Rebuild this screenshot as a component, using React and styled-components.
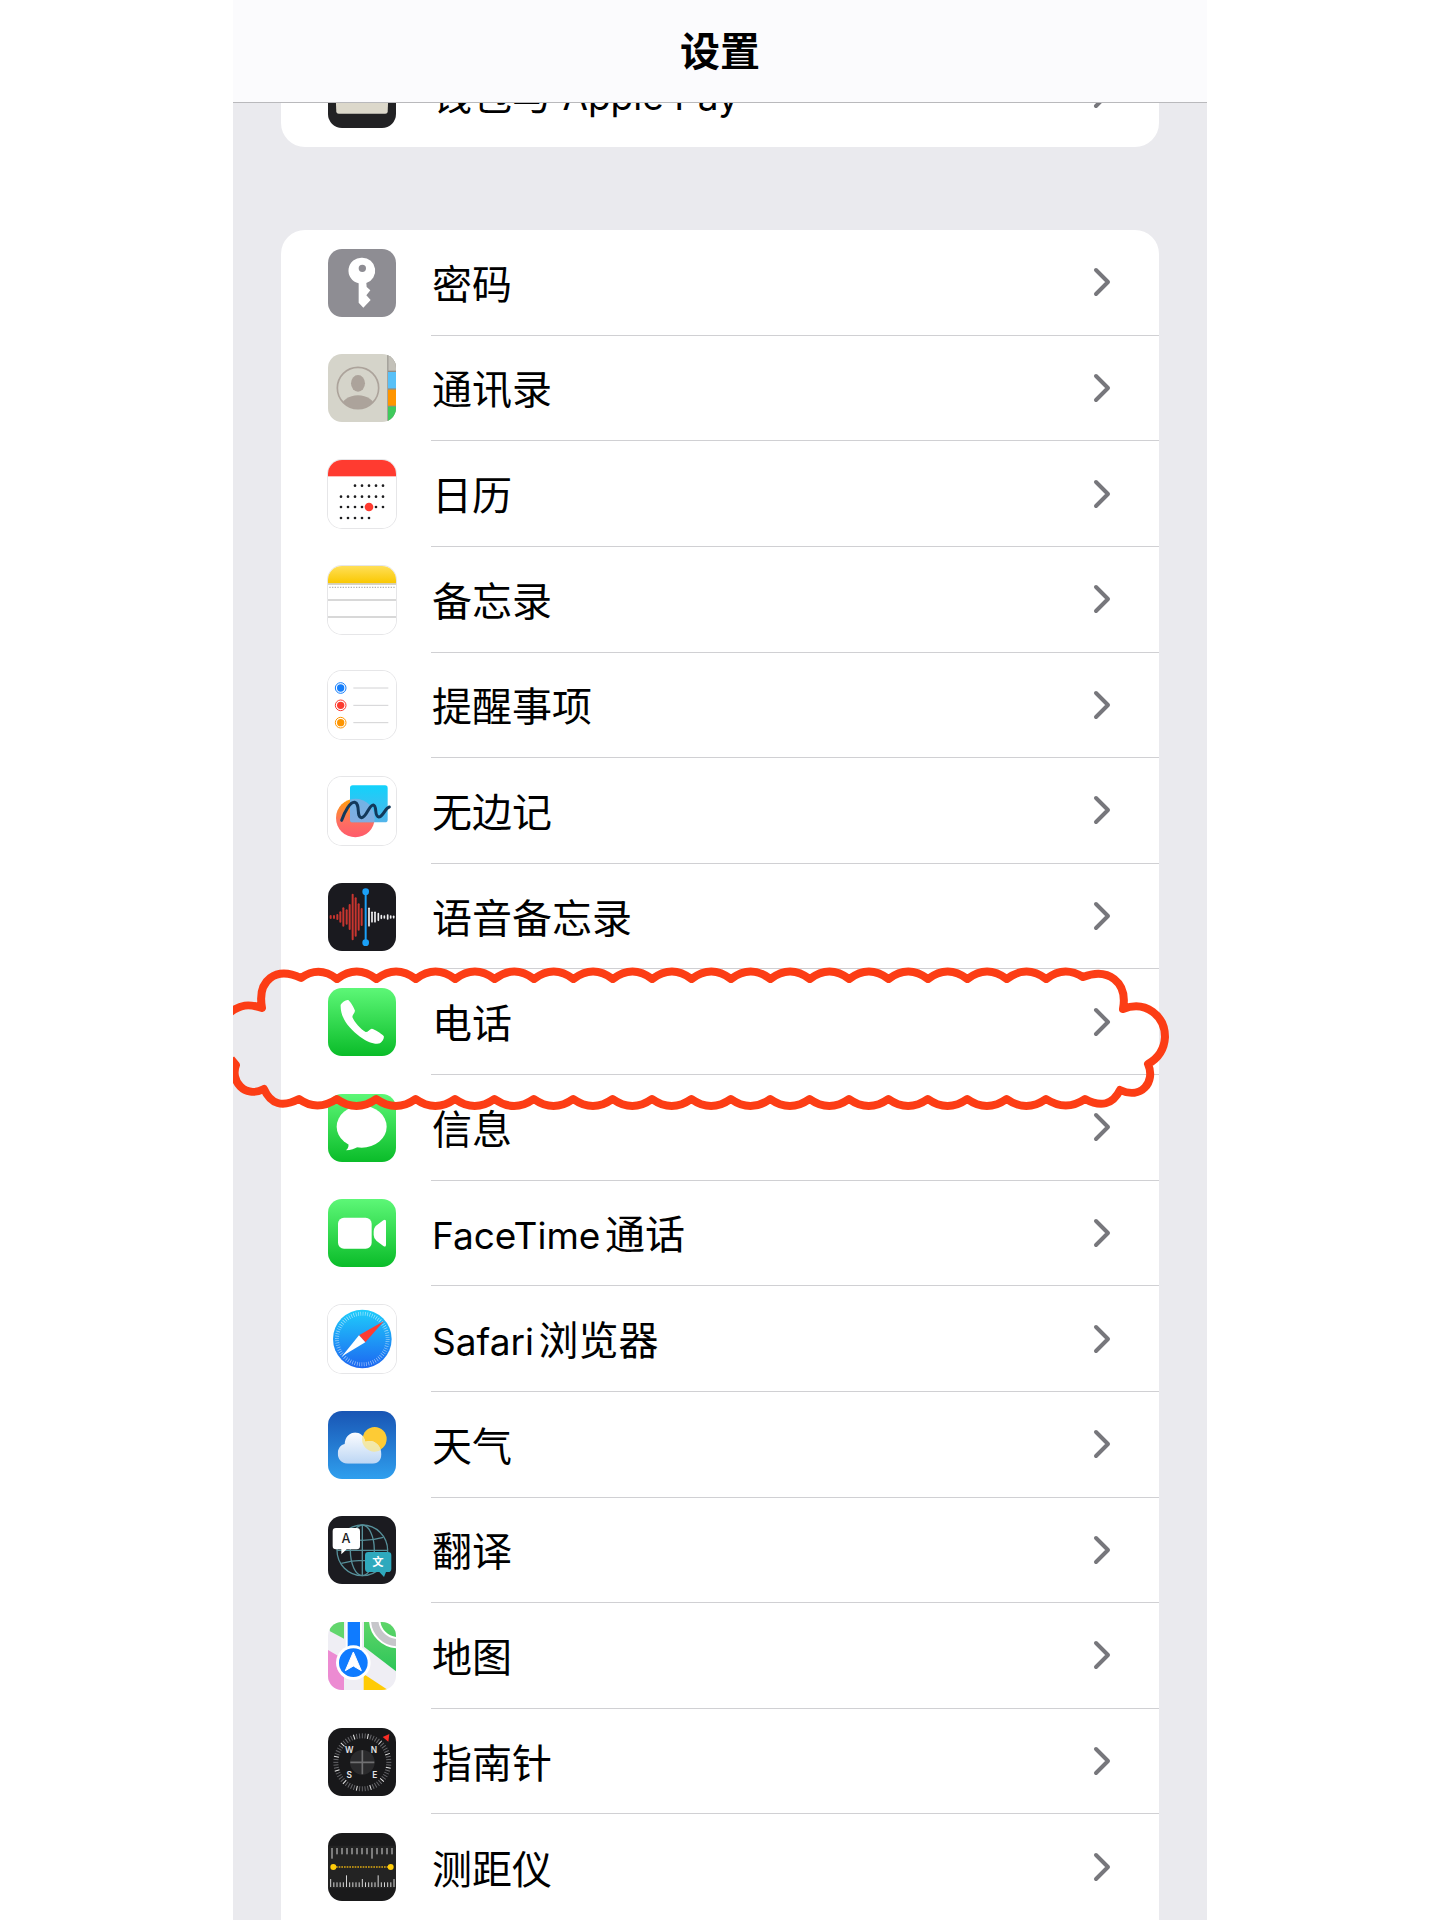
import React from 'react';
import styled, { createGlobalStyle } from 'styled-components';

const CALENDAR_ROWS = [
  { y: 77, from: 2, to: 6 },
  { y: 110, from: 0, to: 6 },
  { y: 141, from: 0, to: 6 },
  { y: 174, from: 0, to: 4 },
];

// [x, half height]
const RED_BARS = [[8, 3], [18, 3], [28, 6], [37, 14], [46, 26], [56, 20], [65, 36], [74, 67], [83, 56], [92, 38], [101, 24]];
const WHITE_BARS = [[123, 26], [132, 14], [141, 14], [151, 10], [160, 4], [169, 3], [179, 6], [188, 3], [197, 2]];

const range = (n) => Array.from({ length: n }, (_, i) => i);

// Every icon is drawn on a 204 x 204 grid
const icons = {
  wallet: (
    <>
      <rect width="204" height="204" fill="#222224" />
      <path d="M20 40H184L179 156Q178 161 172 161H32Q26 161 25 156Z" fill="#dcd8cb" />
    </>
  ),
  key: (
    <>
      <rect width="204" height="204" fill="#8e8d93" />
      <path
        fill="#fff"
        fillRule="evenodd"
        d="M103 26A39 39 0 0 1 115 102L116 114L127 124L115 139L128 153L106 176L92 161V103A39 39 0 0 1 103 26ZM103 47A11 11 0 1 0 103 69A11 11 0 1 0 103 47Z"
      />
    </>
  ),
  contacts: (
    <>
      <clipPath id="face"><circle cx="90" cy="102" r="62" /></clipPath>
      <rect width="204" height="204" fill="#d5d4ca" />
      <rect x="178" width="26" height="204" fill="#8f8d86" />
      <rect x="181" width="23" height="50" fill="#c3c1b9" />
      <rect x="180" y="54" width="24" height="49" fill="#58c0f7" />
      <rect x="180" y="107" width="24" height="48" fill="#ff9500" />
      <rect x="180" y="158" width="24" height="46" fill="#3fca5c" />
      <circle cx="90" cy="102" r="62" fill="none" stroke="#aca39b" strokeWidth="5" />
      <ellipse cx="90" cy="88" rx="21" ry="25" fill="#aca39b" />
      <ellipse cx="90" cy="160" rx="50" ry="36" fill="#aca39b" clipPath="url(#face)" />
    </>
  ),
  calendar: (
    <>
      <rect width="204" height="204" fill="#fff" />
      <rect width="204" height="49" fill="#ff3b30" />
      {CALENDAR_ROWS.map((row) =>
        range(row.to - row.from + 1).map((i) => (
          <circle key={i} cx={39 + (row.from + i) * 21} cy={row.y} r="4" fill="#1d1d1f" />
        ))
      )}
      <circle cx="123" cy="141" r="13" fill="#ff3b30" />
    </>
  ),
  notes: (
    <>
      <linearGradient id="pad" x2="0" y2="1">
        <stop stopColor="#ffdf58" />
        <stop offset="1" stopColor="#fac800" />
      </linearGradient>
      <rect width="204" height="204" fill="#fff" />
      <rect width="204" height="52" fill="url(#pad)" />
      <path d="M0 54H204" stroke="#c9c4b4" strokeWidth="4" />
      <path d="M4 64H204" stroke="#b5b5b5" strokeWidth="4" strokeDasharray="4 4" />
      <path d="M0 102H204M0 153H204" stroke="#cbcbcb" strokeWidth="4" />
    </>
  ),
  reminders: (
    <>
      <rect width="204" height="204" fill="#fff" />
      {['#147efb', '#fc3b30', '#fd9500'].map((color, i) => (
        <g key={color}>
          <circle cx="38" cy={51 + i * 52} r="16" fill="none" stroke={color} strokeWidth="3" />
          <circle cx="38" cy={51 + i * 52} r="11" fill={color} />
          <path d={`M76 ${51 + i * 52}H181`} stroke="#d2d2d4" strokeWidth="3" />
        </g>
      ))}
    </>
  ),
  freeform: (
    <>
      <linearGradient id="ball" x2="0" y2="1">
        <stop stopColor="#ff9f0a" />
        <stop offset="0.6" stopColor="#fd6f61" />
        <stop offset="1" stopColor="#ff5a6b" />
      </linearGradient>
      <linearGradient id="sheet" x2="0" y2="1">
        <stop stopColor="#12d2fb" />
        <stop offset="1" stopColor="#53b4ea" />
      </linearGradient>
      <clipPath id="sheetArea"><rect x="66" y="25" width="113" height="111" rx="8" /></clipPath>
      <rect width="204" height="204" fill="#fff" />
      <circle cx="82" cy="123" r="58" fill="url(#ball)" />
      <rect x="66" y="25" width="113" height="111" rx="8" fill="url(#sheet)" />
      <circle cx="82" cy="123" r="58" fill="#9aa9dc" opacity="0.65" clipPath="url(#sheetArea)" />
      <path
        d="M41 130C50 104 66 74 80 76C98 80 84 120 100 122C116 122 122 84 136 84C148 86 138 118 152 120C166 120 170 94 184 90"
        fill="none"
        stroke="#12395b"
        strokeWidth="9"
        strokeLinecap="round"
      />
    </>
  ),
  voice: (
    <>
      <rect width="204" height="204" fill="#1a1a1f" />
      {RED_BARS.map(([x, h]) => (
        <path key={x} d={`M${x} ${102 - h}V${102 + h}`} stroke="#c8352f" strokeWidth="6" strokeLinecap="round" />
      ))}
      {WHITE_BARS.map(([x, h]) => (
        <path key={x} d={`M${x} ${102 - h}V${102 + h}`} stroke="#f1f1f3" strokeWidth="5" strokeLinecap="round" />
      ))}
      <path d="M113 26V179" stroke="#1ba0f7" strokeWidth="6" />
      <circle cx="113" cy="26" r="10" fill="#1ba0f7" />
      <circle cx="113" cy="179" r="10" fill="#1ba0f7" />
    </>
  ),
  phone: (
    <>
      <rect width="204" height="204" fill="url(#green)" />
      <path
        fill="#fff"
        d="M38 50C43 42 54 34 61 36C68 42 77 57 81 68C80 76 73 80 73 87C78 101 98 124 113 132C119 133 124 124 131 122C140 124 158 134 167 144C170 150 163 162 156 166C140 170 118 162 96 146C64 122 36 90 38 50Z"
      />
    </>
  ),
  messages: (
    <>
      <rect width="204" height="204" fill="url(#green)" />
      <ellipse cx="101" cy="98" rx="75" ry="63" fill="#fff" />
      <path d="M60 144C64 155 61 163 54 169C68 169 80 165 92 157Z" fill="#fff" />
    </>
  ),
  facetime: (
    <>
      <rect width="204" height="204" fill="url(#green)" />
      <rect x="30" y="56" width="101" height="93" rx="18" fill="#fff" />
      <path d="M137 98Q137 86 146 79L166 64Q174 59 174 68V137Q174 146 166 141L146 126Q137 119 137 108Z" fill="#fff" />
    </>
  ),
  safari: (
    <>
      <linearGradient id="dial" x2="0" y2="1">
        <stop stopColor="#1fcdfb" />
        <stop offset="1" stopColor="#1d67f1" />
      </linearGradient>
      <rect width="204" height="204" fill="#fff" />
      <circle cx="103" cy="102" r="88" fill="url(#dial)" />
      <circle cx="103" cy="102" r="76" fill="none" stroke="#fff" strokeOpacity="0.6" strokeWidth="12" strokeDasharray="2 5" />
      <path d="M168 48L93 91L112 112Z" fill="#fd3c32" />
      <path d="M42 154L93 91L112 112Z" fill="#fff" />
    </>
  ),
  weather: (
    <>
      <linearGradient id="sky" x2="0" y2="1">
        <stop stopColor="#1955b4" />
        <stop offset="1" stopColor="#2f9fee" />
      </linearGradient>
      <linearGradient id="cloud" gradientUnits="userSpaceOnUse" x1="0" y1="64" x2="0" y2="158">
        <stop stopColor="#fcfdff" />
        <stop offset="1" stopColor="#bcd6f4" />
      </linearGradient>
      <clipPath id="cloudArea">
        <path d="M60 158C22 158 20 106 50 99C52 56 104 52 112 92C142 82 162 108 160 132C159 148 150 158 134 158Z" />
      </clipPath>
      <rect width="204" height="204" fill="url(#sky)" />
      <circle cx="140" cy="84" r="36" fill="#fdcb35" />
      <g clipPath="url(#cloudArea)">
        <rect width="204" height="204" fill="url(#cloud)" />
        <circle cx="140" cy="84" r="38" fill="#f7e58c" opacity="0.75" />
      </g>
    </>
  ),
  translate: (
    <>
      <rect width="204" height="204" fill="#1b1b20" />
      <g fill="none" stroke="#568f99" strokeWidth="4">
        <circle cx="103" cy="103" r="76" />
        <ellipse cx="103" cy="103" rx="36" ry="76" />
        <path d="M103 27V179M27 103H179M40 64Q103 82 166 64M40 142Q103 124 166 142" />
      </g>
      <path d="M24 36H86Q96 36 96 46V90Q96 100 86 100H56L40 115V100H24Q14 100 14 90V46Q14 36 24 36Z" fill="#fff" />
      <path d="M121 108H180Q190 108 190 118V158Q190 168 180 168H174L168 183L154 168H121Q111 168 111 158V118Q111 108 121 108Z" fill="#2fa9bd" />
      <text x="54" y="82" fill="#1b1b20" fontSize="38" fontWeight="500" textAnchor="middle">A</text>
      <text x="150" y="151" fill="#fff" fontSize="34" fontWeight="700" textAnchor="middle">文</text>
    </>
  ),
  maps: (
    <>
      <linearGradient id="park" x2="0" y2="1">
        <stop stopColor="#5ed569" />
        <stop offset="1" stopColor="#2dc558" />
      </linearGradient>
      <clipPath id="parkArea"><path d="M108 0H204V148L108 74Z" /></clipPath>
      <rect width="204" height="204" fill="#efeef4" />
      <path d="M0 0H48V50L6 28Z" fill="#62d66d" />
      <path d="M108 0H204V148L108 74Z" fill="url(#park)" />
      <g clipPath="url(#parkArea)" fill="none">
        <circle cx="210" cy="-8" r="70" stroke="#fff" strokeWidth="34" />
        <circle cx="210" cy="-8" r="70" stroke="#c6c6ca" strokeWidth="22" />
      </g>
      <path d="M0 84L48 112V204H0Z" fill="#ec8bd2" />
      <path d="M107 156L180 204H107Z" fill="#ffcb05" />
      <rect x="53" width="49" height="90" fill="#fff" />
      <rect x="59" width="37" height="90" fill="#0f7bff" />
      <circle cx="76" cy="122" r="52" fill="#fff" />
      <circle cx="76" cy="122" r="43" fill="#0f7bff" />
      <path d="M76 90L100 146L76 132L52 146Z" fill="#fff" stroke="#fff" strokeWidth="3" strokeLinejoin="round" />
    </>
  ),
  compass: (
    <>
      <rect width="204" height="204" fill="#18181a" />
      {range(60).map((i) => (
        <path
          key={i}
          d="M103 16V31"
          stroke={i % 5 === 2 ? '#e8e8e8' : '#66666a'}
          strokeWidth="3"
          transform={`rotate(${i * 6} 103 103)`}
        />
      ))}
      <circle cx="103" cy="103" r="37" fill="#2b2b2d" />
      <path d="M103 67V139M67 103H139" stroke="#707072" strokeWidth="5" />
      <path d="M164 27L184 18L181 41Z" fill="#fb2d26" />
      <g fill="#e4e4e6" fontSize="25" fontWeight="600" textAnchor="middle">
        <text x="64" y="75">W</text>
        <text x="138" y="75">N</text>
        <text x="64" y="151">S</text>
        <text x="140" y="151">E</text>
      </g>
    </>
  ),
  measure: (
    <>
      <rect width="204" height="204" fill="#1a1a1b" />
      <rect y="38" width="204" height="128" fill="#232323" />
      {range(13).map((i) => (
        <path key={i} d={`M${12 + i * 15} 45V${i % 8 === 0 ? 77 : 64}`} stroke="#d6d6d6" strokeWidth="3" />
      ))}
      {range(21).map((i) => (
        <path
          key={i}
          d={`M${8 + i * 9.5} 162V${i % 10 === 5 ? 127 : i % 5 === 0 ? 138 : 148}`}
          stroke="#d6d6d6"
          strokeWidth="3"
        />
      ))}
      <path d="M16 102H188" stroke="#dca912" strokeWidth="4" strokeDasharray="5 3" />
      <circle cx="16" cy="102" r="9" fill="#ffcc0a" />
      <circle cx="188" cy="102" r="9" fill="#ffcc0a" />
    </>
  ),
};

const APPS = [
  { icon: 'key', label: '密码' },
  { icon: 'contacts', label: '通讯录' },
  { icon: 'calendar', label: '日历', outlined: true },
  { icon: 'notes', label: '备忘录', outlined: true },
  { icon: 'reminders', label: '提醒事项', outlined: true },
  { icon: 'freeform', label: '无边记', outlined: true },
  { icon: 'voice', label: '语音备忘录' },
  { icon: 'phone', label: '电话', marked: true },
  { icon: 'messages', label: '信息' },
  { icon: 'facetime', label: 'FaceTime通话' },
  { icon: 'safari', label: 'Safari浏览器', outlined: true },
  { icon: 'weather', label: '天气' },
  { icon: 'translate', label: '翻译' },
  { icon: 'maps', label: '地图' },
  { icon: 'compass', label: '指南针' },
  { icon: 'measure', label: '测距仪' },
];

// hand-drawn cloud round one row
const scallops = (count, dx, depth) => `q${dx / 2} ${depth} ${dx} 0`.repeat(count);
const cloudPath = [
  'M226 1016C240 1003 250 1004 262 1008',
  'C257 980 276 966 301 978Q319 965 337 979',
  scallops(18, 39.4, -15),
  'Q1064 965 1083 977C1108 967 1128 982 1123 1009',
  'C1146 1000 1165 1016 1165 1037Q1164 1055 1148 1064',
  'C1156 1082 1141 1100 1120 1090',
  'Q1109 1112 1085 1099Q1066 1112 1046 1099',
  scallops(18, -39.4, 14),
  'Q317 1112 299 1099Q274 1112 264 1089',
  'C244 1099 230 1080 236 1065L231 1059',
].join('');

// Latin words sit a little smaller beside the Chinese ones
const splitLabel = (label) =>
  label
    .split(/([A-Za-z ]+)/)
    .filter(Boolean)
    .map((part) => (/[A-Za-z]/.test(part) ? <Latin key={part}>{part}</Latin> : part));

const SettingRow = ({ icon, label, outlined, marked }) => (
  <Row>
    <RowLink href={`#${icon}`}>
      <AppIcon viewBox="0 0 204 204" $outlined={outlined} aria-hidden="true">
        {icons[icon]}
      </AppIcon>
      <RowBody>
        <Label>{splitLabel(label)}</Label>
        <Chevron viewBox="0 0 18 30" aria-hidden="true">
          <path d="M3 3L15 15L3 27" />
        </Chevron>
      </RowBody>
    </RowLink>
    {marked && (
      <CloudMark viewBox="233 960 940 160" aria-hidden="true">
        <path d={cloudPath} />
      </CloudMark>
    )}
  </Row>
);

const App = () => (
  <>
    <GlobalStyle />
    <SharedDefs aria-hidden="true">
      <linearGradient id="green" x2="0" y2="1">
        <stop stopColor="#5df777" />
        <stop offset="1" stopColor="#0abc29" />
      </linearGradient>
    </SharedDefs>
    <Screen lang="zh-CN">
      <Header>
        <h1>设置</h1>
      </Header>
      <Content>
        <ScrolledGroup>
          <SettingRow icon="wallet" label="钱包与 Apple Pay" />
        </ScrolledGroup>
        <AppGroup>
          {APPS.map((app) => (
            <SettingRow key={app.icon} {...app} />
          ))}
        </AppGroup>
      </Content>
    </Screen>
  </>
);

// Styled components

const GlobalStyle = createGlobalStyle`
  * {
    box-sizing: border-box;
  }
  body {
    margin: 0;
    background: #fff;
    color: #000;
    font-family: Inter, "Noto Sans CJK SC", sans-serif;
  }
`;

const SharedDefs = styled.svg`
  position: absolute;
  width: 0;
  height: 0;
`;

const Screen = styled.div`
  display: flex;
  flex-direction: column;
  max-width: 974px;
  min-height: 100vh;
  margin: 0 auto;
  background: #eaeaee;
`;

const Header = styled.header`
  position: sticky;
  top: 0;
  z-index: 2;
  display: flex;
  align-items: center;
  justify-content: center;
  height: 103px;
  padding-top: 2px;
  background: #fbfbfd;
  border-bottom: 1px solid #b9b9bc;

  h1 {
    margin: 0;
    font-size: 40px;
    line-height: 40px;
    font-weight: 700;
  }
`;

const Content = styled.main`
  flex: 1;
  display: flex;
  flex-direction: column;
  gap: 83px;
  padding: 0 48px;
  overflow: hidden;
`;

const Group = styled.ul`
  display: grid;
  grid-auto-rows: 1fr;
  margin: 0;
  padding: 0;
  list-style: none;
  background: #fff;
`;

// partly scrolled away under the header
const ScrolledGroup = styled(Group)`
  height: 106px;
  margin-top: -62px;
  border-radius: 0 0 24px 24px;
`;

const AppGroup = styled(Group)`
  flex: 1;
  border-radius: 24px 24px 0 0;
`;

const Row = styled.li`
  position: relative;
  display: flex;
  min-height: 104px;
`;

const RowLink = styled.a`
  flex: 1;
  display: flex;
  align-items: center;
  gap: 35px;
  padding-left: 47px;
  color: inherit;
  text-decoration: none;
`;

const AppIcon = styled.svg`
  flex: none;
  width: 68px;
  height: 68px;
  border-radius: 14px;
  box-shadow: ${(props) => (props.$outlined ? '0 0 0 1px #e6e6e8' : 'none')};
`;

const RowBody = styled.div`
  flex: 1;
  align-self: stretch;
  display: flex;
  align-items: center;
  justify-content: space-between;
  padding-right: 48px;
  border-bottom: 1px solid #d0d0d3;

  ${Row}:last-child & {
    border-bottom: none;
  }
`;

const Label = styled.span`
  padding: 5px 0 0 1px;
  font-size: 40px;
  line-height: 40px;
  text-autospace: normal;
`;

const Latin = styled.span`
  font-size: 37px;
  white-space: pre;
`;

const Chevron = styled.svg`
  width: 18px;
  height: 30px;
  fill: none;
  stroke: #77777c;
  stroke-width: 4;
  stroke-linecap: round;
  stroke-linejoin: round;
`;

const CloudMark = styled.svg`
  position: absolute;
  z-index: 1;
  top: -9px;
  left: -48px;
  width: calc(100% + 62px);
  height: 160px;
  fill: none;
  stroke: #fc3d15;
  stroke-width: 8;
  stroke-linejoin: round;
  pointer-events: none;
`;

export default App;
